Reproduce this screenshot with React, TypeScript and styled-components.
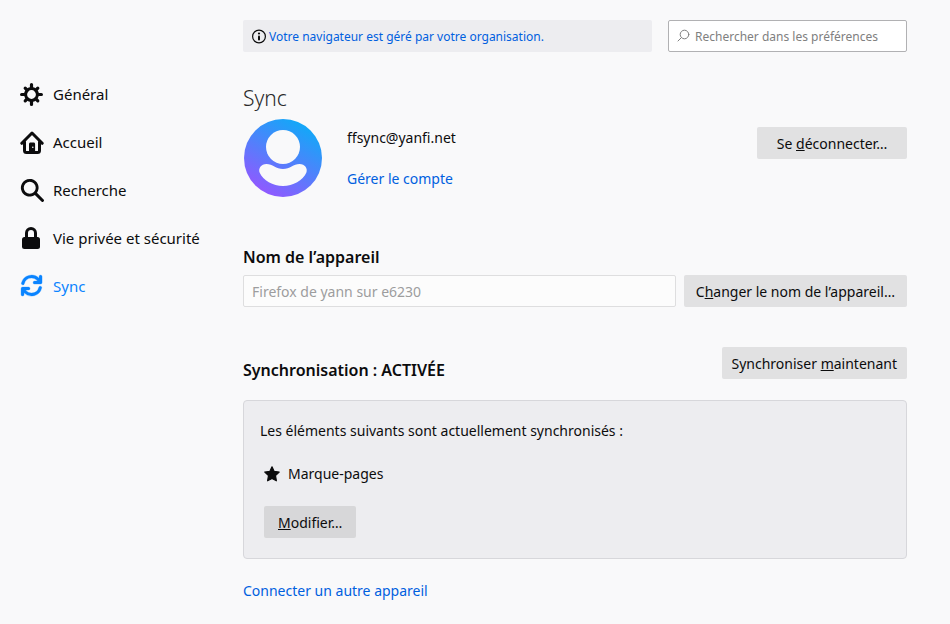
import React from "react";
import styled, { createGlobalStyle } from "styled-components";

const GlobalStyle = createGlobalStyle`
  *, *::before, *::after { box-sizing: border-box; }
  body {
    margin: 0;
    background: #f9f9fa;
    color: #0c0c0d;
    font: 14px/24px "Noto Sans", sans-serif;
  }
  button, input { font: inherit; color: inherit; }
`;

const Page = styled.div`
  display: grid;
  grid-template-columns: 243px minmax(0, 664px);
  padding-right: 43px;
`;

const Sidebar = styled.nav`
  display: flex;
  flex-direction: column;
  padding: 70px 0 0 20px;
  font-size: 15px;
`;

const Category = styled.a<{ $active?: boolean }>`
  display: flex;
  align-items: center;
  gap: 9px;
  height: 48px;
  color: ${(p) => (p.$active ? "#0a84ff" : "#0c0c0d")};
  text-decoration: none;
  svg { flex: none; width: 24px; height: 24px; }
`;

const Main = styled.main`
  display: flex;
  flex-direction: column;
  align-items: stretch;
  padding: 20px 0 16px;
`;

const TopBar = styled.div`
  display: flex;
  gap: 16px;
`;

const PolicyNotice = styled.a`
  display: flex;
  align-items: center;
  flex: 1;
  gap: 2px;
  height: 32px;
  padding: 1px 8px 0;
  border-radius: 2px;
  background: #ededf0;
  color: #0060df;
  font-size: 12px;
  text-decoration: none;
  svg { flex: none; color: #0c0c0d; }
`;

const SearchBox = styled.label`
  display: flex;
  align-items: center;
  gap: 5px;
  width: 239px;
  height: 32px;
  padding: 0 8px;
  border: 1px solid #b1b1b3;
  border-radius: 2px;
  background: #fff;
  color: #808080;
  svg { flex: none; }
`;

const SearchInput = styled.input`
  flex: 1;
  min-width: 0;
  padding: 2px 0 0;
  border: 0;
  outline: 0;
  background: transparent;
  font-size: 12px;
  &::placeholder { color: #808080; opacity: 1; }
`;

const Title = styled.h1`
  margin: 30px 0 4px;
  color: #2a2a2b;
  font-size: 21px;
  font-weight: 300;
  line-height: 32px;
`;

const DeviceRow = styled.div`
  display: flex;
  align-items: center;
  gap: 8px;
`;

const Account = styled.section`
  display: flex;
  align-items: flex-start;
  svg { flex: none; }
`;

const AccountInfo = styled.div`
  display: flex;
  flex: 1;
  flex-direction: column;
  align-items: flex-start;
  gap: 17px;
  padding: 8px 0 0 24px;
`;

const Link = styled.a`
  align-self: flex-start;
  color: #0060df;
  text-decoration: none;
`;

const Button = styled.button<{ $pad?: number }>`
  flex: none;
  height: 32px;
  padding: 2px ${(p) => p.$pad ?? 10}px 0;
  border: 0;
  border-radius: 2px;
  background: #e1e1e2;
`;

const SignOut = styled(Button)`
  min-width: 150px;
  margin-top: 9px;
`;

const EditButton = styled(Button)`
  background: #d7d7d9;
`;

const Heading = styled.h2`
  margin: 0;
  font-size: 16px;
  font-weight: 600;
  line-height: 24px;
`;

const Device = styled.section`
  display: flex;
  flex-direction: column;
  gap: 6px;
  margin-top: 47px;
`;

const DeviceInput = styled.input`
  flex: 1;
  min-width: 0;
  height: 32px;
  padding: 0 8px;
  border: 1px solid #dededf;
  border-radius: 2px;
  background: #fcfcfc;
  &:disabled { color: #9d9d9e; }
`;

const SyncHeader = styled.div`
  display: flex;
  align-items: flex-start;
  justify-content: space-between;
  margin-top: 40px;
  ${Heading} { padding-top: 11px; }
`;

const SyncPanel = styled.section`
  display: flex;
  flex-direction: column;
  align-items: flex-start;
  margin: 18px 0 20px;
  padding: 18px 16px 20px;
  border: 1px solid #d7d7db;
  border-radius: 4px;
  background: #ededf0;
`;

const PanelText = styled.p`
  margin: 0;
`;

const Engines = styled.ul`
  margin: 19px 0 20px;
  padding: 0 4px;
  list-style: none;
`;

const Engine = styled.li`
  display: flex;
  align-items: center;
  gap: 8px;
`;

const PanelAction = styled.div`
  padding: 0 4px;
`;

const GearIcon = () => (
  <svg viewBox="0 0 24 24" fill="none" stroke="currentColor" strokeLinecap="round" aria-hidden="true">
    <circle cx="11.5" cy="12.5" r="5.9" strokeWidth="3" />
    <path strokeWidth="3.2" d="M11.5 6V2.6M11.5 19v3.4M5 12.5H1.6M18 12.5h3.4M7 8 5.2 6.2M16 8l1.8-1.8M7 17l-1.8 1.8M16 17l1.8 1.8" />
  </svg>
);

const HomeIcon = () => (
  <svg viewBox="0 0 24 24" fill="none" stroke="currentColor" strokeWidth="3" strokeLinecap="round" strokeLinejoin="round" aria-hidden="true">
    <path d="M1.800 13.300 12 3l10.200 10.300" />
    <path d="M4.500 12v8.500c0 1.200.8 2 2 2h11c1.200 0 2-.8 2-2V12" />
    <path d="M9 22v-8c0-1 .6-1.600 1.600-1.600h2.900c1 0 1.600.6 1.600 1.600v8z" fill="currentColor" stroke="none" />
    <circle cx="12.800" cy="17.300" r=".8" fill="#f9f9fa" stroke="none" />
  </svg>
);

const SearchIcon = () => (
  <svg viewBox="0 0 16 16" fill="currentColor" aria-hidden="true">
    <path d="M15.707 14.293l-4.400-4.400a5.900 5.900 0 1 0-1.414 1.414l4.400 4.400a1 1 0 0 0 1.414-1.414zM6.500 10.500a4 4 0 1 1 4-4 4 4 0 0 1-4 4z" />
  </svg>
);

const LockIcon = () => (
  <svg viewBox="0 0 24 24" aria-hidden="true">
    <path d="M6.500 11V6.900a4.500 4.500 0 0 1 9 0V11" fill="none" stroke="currentColor" strokeWidth="3" />
    <rect x="2" y="11" width="18" height="12" rx="2.500" fill="currentColor" />
  </svg>
);

const SyncIcon = () => (
  <svg viewBox="0 0 16 16" fill="currentColor" stroke="currentColor" strokeWidth=".2" aria-hidden="true">
    <path d="M14 1a1 1 0 0 0-1 1v1.146A6.948 6.948 0 0 0 1.227 6.307a1 1 0 1 0 1.940.484A4.983 4.983 0 0 1 8 3a4.919 4.919 0 0 1 3.967 2H10a1 1 0 0 0 0 2h4a1 1 0 0 0 1-1V2a1 1 0 0 0-1-1zm.046 7.481a1 1 0 0 0-1.213.728A4.983 4.983 0 0 1 8 13a4.919 4.919 0 0 1-3.967-2H6a1 1 0 0 0 0-2H2a1 1 0 0 0-1 1v4a1 1 0 0 0 2 0v-1.146a6.948 6.948 0 0 0 11.773-3.161 1 1 0 0 0-.727-1.212z" transform="translate(-.3 -.3)" />
  </svg>
);

const InfoIcon = () => (
  <svg width="16" height="16" viewBox="0 0 16 16" aria-hidden="true">
    <circle cx="8" cy="7.500" r="6.400" fill="none" stroke="currentColor" strokeWidth="1.200" />
    <circle cx="8" cy="4.500" r="1.100" fill="currentColor" />
    <rect x="7" y="6.500" width="2" height="5" rx="1" fill="currentColor" />
  </svg>
);

const FindIcon = () => (
  <svg width="13" height="14" viewBox="0 0 13 14" fill="none" stroke="currentColor" strokeLinecap="round" aria-hidden="true">
    <circle cx="7.500" cy="5.500" r="4.300" />
    <path d="m4.300 8.700-3.300 3.300" />
  </svg>
);

const Avatar = () => (
  <svg width="80" height="80" viewBox="0 0 80 80" role="img" aria-label="Profil">
    <defs>
      <linearGradient id="avatar-fill" x1="20" y1="74" x2="60" y2="6" gradientUnits="userSpaceOnUse">
        <stop offset="0" stopColor="#9059ff" />
        <stop offset="1" stopColor="#12a8f8" />
      </linearGradient>
    </defs>
    <circle cx="40" cy="40" r="39" fill="url(#avatar-fill)" />
    <circle cx="40" cy="29" r="17" fill="#f9f9fa" />
    <path d="M23.500 46c6 0 9.500 5 16.500 5s10.500-5 16.500-5c5.500 0 8.500 4.500 6.800 8.800C60 62.300 50 68 40 68s-20-5.700-23.300-13.200C15 50.500 18 46 23.500 46z" fill="#f9f9fa" />
  </svg>
);

const StarIcon = () => (
  <svg width="16" height="16" viewBox="0 0 16 16" aria-hidden="true">
    <path d="M8 .8 10.200 5.400l5 .6-3.700 3.600.9 5.200L8 12.400l-4.400 2.400.9-5.200L.8 6l5-.6z" fill="currentColor" stroke="currentColor" strokeWidth="1.200" strokeLinejoin="round" />
  </svg>
);

const categories = [
  { label: "Général", href: "#general", icon: GearIcon },
  { label: "Accueil", href: "#home", icon: HomeIcon },
  { label: "Recherche", href: "#search", icon: SearchIcon },
  { label: "Vie privée et sécurité", href: "#privacy", icon: LockIcon },
  { label: "Sync", href: "#sync", icon: SyncIcon, active: true },
];

export default function App() {
  return (
    <>
      <GlobalStyle />
      <Page>
        <Sidebar aria-label="Catégories">
          {categories.map(({ label, href, icon: Icon, active }) => (
            <Category key={href} href={href} $active={active} aria-current={active ? "page" : undefined}>
              <Icon />
              {label}
            </Category>
          ))}
        </Sidebar>
        <Main>
          <TopBar>
            <PolicyNotice href="#policies">
              <InfoIcon />
              Votre navigateur est géré par votre organisation.
            </PolicyNotice>
            <SearchBox>
              <FindIcon />
              <SearchInput type="text" placeholder="Rechercher dans les préférences" aria-label="Rechercher dans les préférences" />
            </SearchBox>
          </TopBar>
          <Title>Sync</Title>
          <Account>
            <Avatar />
            <AccountInfo>
              <span>ffsync@yanfi.net</span>
              <Link href="#account">Gérer le compte</Link>
            </AccountInfo>
            <SignOut type="button">
              Se <u>d</u>éconnecter…
            </SignOut>
          </Account>
          <Device>
            <Heading as="label" htmlFor="device-name">Nom de l’appareil</Heading>
            <DeviceRow>
              <DeviceInput id="device-name" type="text" defaultValue="Firefox de yann sur e6230" disabled />
              <Button type="button" $pad={12}>
                C<u>h</u>anger le nom de l’appareil…
              </Button>
            </DeviceRow>
          </Device>
          <SyncHeader>
            <Heading>Synchronisation : ACTIVÉE</Heading>
            <Button type="button">
              Synchroniser <u>m</u>aintenant
            </Button>
          </SyncHeader>
          <SyncPanel>
            <PanelText>Les éléments suivants sont actuellement synchronisés :</PanelText>
            <Engines>
              <Engine>
                <StarIcon />
                Marque-pages
              </Engine>
            </Engines>
            <PanelAction>
              <EditButton type="button" $pad={14}>
                <u>M</u>odifier…
              </EditButton>
            </PanelAction>
          </SyncPanel>
          <Link href="#connect">Connecter un autre appareil</Link>
        </Main>
      </Page>
    </>
  );
}
